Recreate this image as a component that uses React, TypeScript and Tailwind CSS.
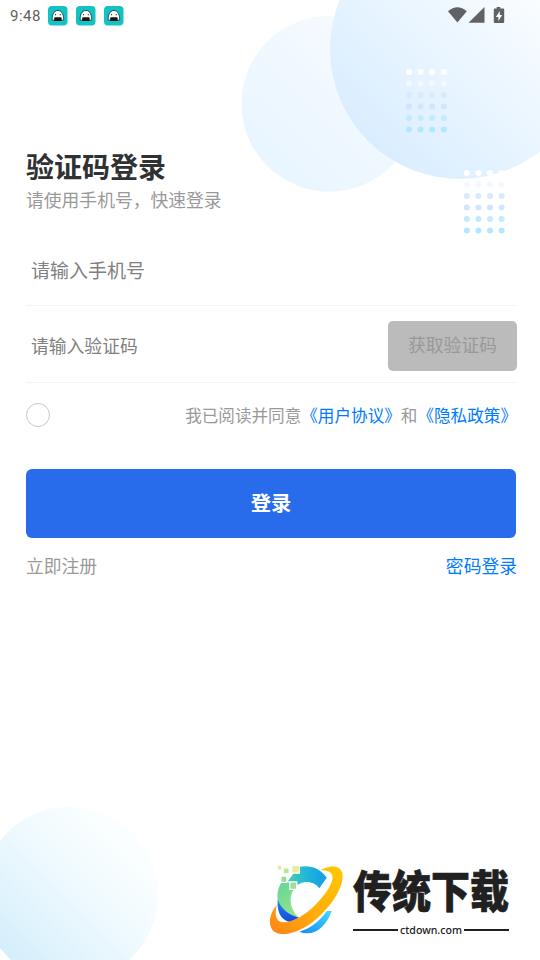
const dotColors = ["#ffffff", "#f3f8ff", "#dbe9fe", "#d3e4fe", "#c3eafe", "#b2e8fe"];

function DotGrid({ x, y }: { x: number; y: number }) {
  return (
    <g>
      {dotColors.map((color, row) =>
        [0, 1, 2, 3].map((col) => (
          <circle key={`${row}-${col}`} cx={x + col * 11.6} cy={y + row * 11.5} r="3" fill={color} />
        )),
      )}
    </g>
  );
}

function Backdrop() {
  return (
    <svg className="pointer-events-none absolute inset-0" width="540" height="960" viewBox="0 0 540 960" aria-hidden="true">
      <defs>
        <linearGradient id="circleLarge" x1="0.14" y1="0.86" x2="0.8" y2="0.2">
          <stop offset="0" stopColor="#d9edff" />
          <stop offset="1" stopColor="#fcfeff" />
        </linearGradient>
        <linearGradient id="circleMedium" x1="0.12" y1="0.88" x2="0.88" y2="0.12">
          <stop offset="0" stopColor="#e8f5ff" />
          <stop offset="1" stopColor="#f8fbff" />
        </linearGradient>
        <linearGradient id="circleBottom" x1="0.12" y1="0.88" x2="0.8" y2="0.2">
          <stop offset="0" stopColor="#d2edfb" />
          <stop offset="0.35" stopColor="#e2f5fd" />
          <stop offset="0.65" stopColor="#f0fafe" />
          <stop offset="1" stopColor="#fafeff" />
        </linearGradient>
      </defs>
      <circle cx="329.5" cy="103.7" r="88" fill="url(#circleMedium)" />
      <circle cx="460" cy="49" r="130" fill="url(#circleLarge)" />
      <circle cx="70" cy="894.5" r="88" fill="url(#circleBottom)" />
      <DotGrid x={409} y={72} />
      <DotGrid x={466.8} y={173} />
    </svg>
  );
}

function AppBadge() {
  return (
    <svg width="20" height="20" viewBox="0 0 20 20">
      <rect width="19.5" height="19.5" rx="4" fill="#13c2c2" />
      <path d="M4.2 14.2C3.8 9.5 5.6 4.6 9.9 4.4c4.3.2 6.1 5.1 5.7 9.8Z" fill="#fff" stroke="#24504f" strokeWidth="1" />
      <path d="M6.2 15v-2.8q0-.9 1-.9h5.4q1 0 1 .9V15Z" fill="#151515" />
      <circle cx="7.5" cy="8.7" r=".6" fill="#222" />
      <circle cx="12.3" cy="8.7" r=".6" fill="#222" />
    </svg>
  );
}

function StatusBar() {
  return (
    <header className="flex h-8 items-center pl-[10px] pr-[35px]">
      <span className="w-[38px] font-[Roboto] text-[15px] leading-none tracking-[0.5px] text-[#606060]">9:48</span>
      <div className="flex gap-2">
        <AppBadge />
        <AppBadge />
        <AppBadge />
      </div>
      <svg className="ml-auto" width="57" height="18" viewBox="0 0 57 18" fill="#606264">
        <path d="M0 4.2Q9.4-3.8 18.8 4.2L9.4 15.5Z" />
        <path d="M36.5 0v15.7H20.5Z" />
        <path d="M48.7 0h3.6v1.5h3q.9 0 .9.9v12.7q0 .9-.9.9h-8.6q-.9 0-.9-.9V2.4q0-.9.9-.9h2Z" />
        <path d="M51.8 4 47.9 10h2.5v4.1l3.8-6h-2.4Z" fill="#fff" />
      </svg>
    </header>
  );
}

function SiteLogo() {
  return (
    <div className="absolute left-[268px] top-[862px] flex h-[76px] w-[244px]">
      <svg className="shrink-0" width="78" height="76" viewBox="0 0 78 76">
        <defs>
          <linearGradient id="logoTop" x1="0" y1="0" x2="1" y2="0">
            <stop offset="0" stopColor="#45cfae" />
            <stop offset=".5" stopColor="#20b5d8" />
            <stop offset="1" stopColor="#149ce8" />
          </linearGradient>
          <linearGradient id="logoLeft" x1="0" y1="0" x2=".5" y2="1">
            <stop offset="0" stopColor="#62d49c" />
            <stop offset="1" stopColor="#8fe389" />
          </linearGradient>
          <linearGradient id="logoBlue" x1="0" y1="0" x2="0" y2="1">
            <stop offset="0" stopColor="#1f8df0" />
            <stop offset="1" stopColor="#1746e0" />
          </linearGradient>
          <linearGradient id="logoRing" x1="1" y1="0" x2="0" y2="1">
            <stop offset="0" stopColor="#ffc800" />
            <stop offset=".55" stopColor="#ffad08" />
            <stop offset="1" stopColor="#ff8218" />
          </linearGradient>
          <linearGradient id="logoTail" x1="0" y1="1" x2="1" y2="0">
            <stop offset="0" stopColor="#168bf0" />
            <stop offset="1" stopColor="#45dafd" />
          </linearGradient>
        </defs>
        <path d="M30 5.3C41 2.5 52 6 58.7 15.7L51.3 26.3C46 18.5 35 18 28 24L20 19Z" fill="url(#logoTop)" />
        <path d="M10 35C8 48 12 58 22 60L31 55.7C20 51 12 44 10 35Z" fill="url(#logoBlue)" />
        <path d="M15 18C10 25 8.5 32 10 38C13 47 21 53 30.3 55.3C21 46 20 33 28 24Z" fill="url(#logoLeft)" />
        <path d="M31.3 69.7C42 66.5 51 60 58.7 49H63.7C58 65 46 75.5 31.3 69.7Z" fill="url(#logoTail)" />
        <path
          d="M52.7 8C62 3 71 3 74 10C78 23 62 48 42 62C26 73 8 76 3.3 66C0 59 3 50 8.7 43C7 51 7 58 13 60C22 62 39 53 51 39C62 27 69 14 61.3 9.7Q58 8 52.7 8Z"
          fill="url(#logoRing)"
        />
        <g stroke="#fff" strokeWidth="1.2">
          <path d="M23.7 3.5h7.7v7.7h-7.7Z" fill="#e9ec98" />
          <path d="M15.2 5.8h6v6h-6Z" fill="#b6e994" />
          <path d="M12.8 14.2h6v6.2h-6Z" fill="#97df90" />
          <path d="M21.8 19.8h7v7.5h-7Z" fill="#9ee09a" />
          <path d="M9.2 3.2h4.6V8.2H9.2Z" fill="#dfec9b" />
        </g>
      </svg>
      <div className="flex w-[164px] flex-col pl-[7px] pt-[3px] text-[#202020]">
        <div className="h-[57px] shrink-0 origin-top scale-y-[1.14] whitespace-nowrap text-[39px] font-black leading-[42px] [-webkit-text-stroke:0.6px_#202020]">
          传统下载
        </div>
        <div className="flex h-4 w-[156px] items-center gap-[2px]">
          <span className="h-[2px] flex-1 bg-[#202020]" />
          <span className="font-['Noto_Sans'] text-[10.6px] font-medium leading-4">ctdown.com</span>
          <span className="h-[2px] flex-1 bg-[#202020]" />
        </div>
      </div>
    </div>
  );
}

export default function App() {
  return (
    <div
      lang="zh-CN"
      className="relative h-[960px] w-[540px] overflow-hidden bg-white font-['Noto_Sans_CJK_SC',sans-serif]"
    >
      <Backdrop />
      <div className="relative">
        <StatusBar />
        <main className="pl-[26px] pr-[23px] pt-[114px]">
          <h1 className="text-[28px] font-bold leading-[40px] text-[#303133]">验证码登录</h1>
          <p className="text-[17.8px] leading-[27px] text-[#999]">请使用手机号，快速登录</p>

          <form className="mt-[23px]" onSubmit={(e) => e.preventDefault()}>
            <div className="flex h-[70px] items-center border-b border-[#f3f3f3] pl-[5px]">
              <input
                type="tel"
                placeholder="请输入手机号"
                className="w-full bg-transparent text-[19px] outline-none placeholder:text-[#808080]"
              />
            </div>
            <div className="flex h-[77px] items-center border-b border-[#f3f3f3] pl-[5px] pt-[3px]">
              <input
                type="text"
                placeholder="请输入验证码"
                className="min-w-0 flex-1 bg-transparent pb-px text-[17.8px] outline-none placeholder:text-[#808080]"
              />
              <button type="button" className="h-[50px] w-[129px] rounded-[5px] bg-[#bbb] pb-[3px] text-[17.8px] text-[#999]">
                获取验证码
              </button>
            </div>

            <div className="flex h-[65px] items-center justify-between pb-px">
              <button type="button" aria-label="同意协议" className="size-6 rounded-full border border-[#c8c8c8] bg-white" />
              <p className="whitespace-nowrap text-[16.6px] text-[#999]">
                我已阅读并同意<a className="text-[#007aff]">《用户协议》</a>和<a className="text-[#007aff]">《隐私政策》</a>
              </p>
            </div>

            <button type="submit" className="mt-[21px] block h-[69px] w-[490px] rounded-md bg-[#286ceb] pb-[3px] text-[20.3px] font-bold text-white">
              登录
            </button>
          </form>

          <div className="mt-[13px] flex justify-between text-[17.8px] leading-7">
            <a className="text-[#999]">立即注册</a>
            <a className="text-[#007aff]">密码登录</a>
          </div>
        </main>
      </div>
      <SiteLogo />
    </div>
  );
}
